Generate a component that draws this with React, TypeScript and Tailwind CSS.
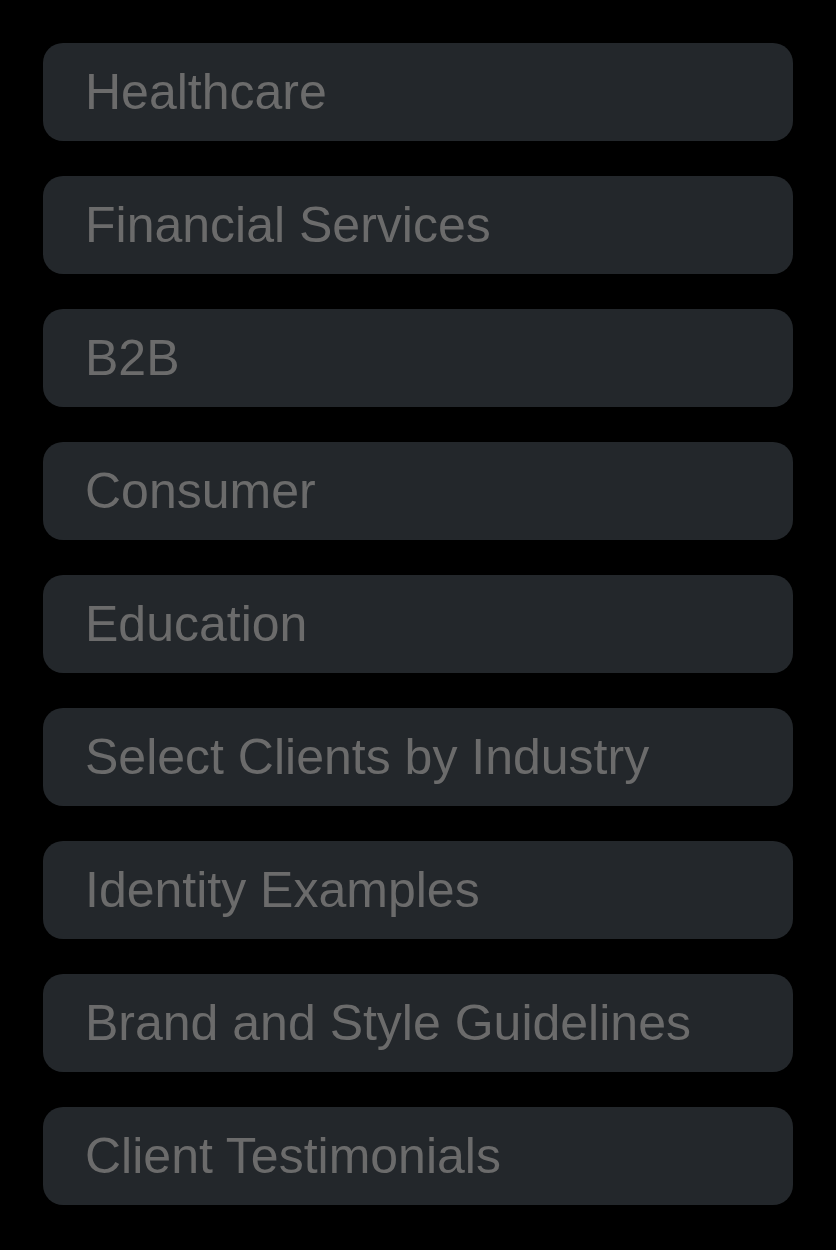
import React from "react";

const items = [
  "Healthcare",
  "Financial Services",
  "B2B",
  "Consumer",
  "Education",
  "Select Clients by Industry",
  "Identity Examples",
  "Brand and Style Guidelines",
  "Client Testimonials",
];

export default function App() {
  return (
    <div className="min-h-[1250px] w-full bg-black px-[43px] pt-[43px] pb-[43px]">
      <div className="flex flex-col gap-[35px]">
        {items.map((t) => (
          <div
            key={t}
            className="flex h-[98px] items-center rounded-[20px] bg-[#23272b] pl-[42px] text-[50px] leading-none text-[#6b6b6b]"
            style={{ fontFamily: '"Liberation Sans", Arial, sans-serif' }}
          >
            {t}
          </div>
        ))}
      </div>
    </div>
  );
}
